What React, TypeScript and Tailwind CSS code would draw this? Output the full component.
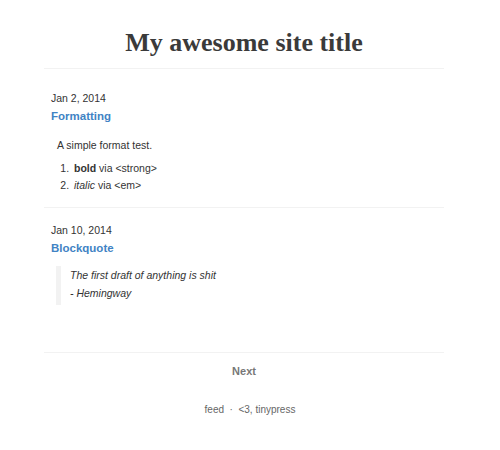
export default function App() {
  const sans = { fontFamily: '"Liberation Sans", Arial, sans-serif' };
  return (
    <div className="w-[500px] h-[450px] bg-white text-[#333]" style={sans}>
      <div className="ml-[44px] w-[400px]">
        <header className="pt-[28px] pb-[10px] border-b border-[#f2f2f2]">
          <h1
            className="text-center text-[26px] leading-[30px] font-bold text-[#3a3a3a]"
            style={{ fontFamily: '"Liberation Serif", "Times New Roman", serif' }}
          >
            My awesome site title
          </h1>
        </header>

        <article className="px-[7px] pt-[21px] pb-[13px] border-b border-[#f2f2f2]">
          <div className="text-[10.5px] leading-[16px]">Jan 2, 2014</div>
          <a className="block text-[11.5px] leading-[20px] font-bold text-[#4183c4]">Formatting</a>
          <p className="pl-[6px] mt-[10px] text-[10.5px] leading-[18px]">A simple format test.</p>
          <ol className="list-decimal pl-[21px] mt-[6px] text-[10.5px] leading-[17px]">
            <li className="pl-[2px]"><strong>bold</strong> via &lt;strong&gt;</li>
            <li className="pl-[2px]"><em>italic</em> via &lt;em&gt;</li>
          </ol>
        </article>

        <article className="px-[7px] pt-[14px] pb-[47px] border-b border-[#f2f2f2]">
          <div className="text-[10.5px] leading-[16px]">Jan 10, 2014</div>
          <a className="block text-[11.5px] leading-[20px] font-bold text-[#4183c4]">Blockquote</a>
          <blockquote className="ml-[5px] mt-[8px] border-l-[5px] border-[#f2f2f2] pl-[9px] pb-[3px] italic text-[10.5px] leading-[18px]">
            <div>The first draft of anything is shit</div>
            <div>- Hemingway</div>
          </blockquote>
        </article>

        <div className="pt-[9px] text-center text-[11px] leading-[18px] font-bold text-[#777]">Next</div>
      </div>
      <footer className="mt-[23px] text-center text-[10px] leading-[14px] text-[#666]">
        feed &nbsp;·&nbsp; &lt;3, tinypress
      </footer>
    </div>
  );
}
